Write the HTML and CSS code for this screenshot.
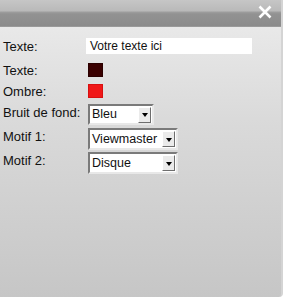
FILE: index.html
```html
<!DOCTYPE html>
<html>
<head>
  <meta charset="UTF-8">
  <title>Texte</title>
  <link rel="stylesheet" href="styles.css">
</head>
<body>
  <div class="panel">
    <div class="head">
      <svg class="close" width="14" height="14" viewBox="0 0 14 14">
        <path d="M1.5 1.5 L12.5 12.5 M12.5 1.5 L1.5 12.5" stroke="#fff" stroke-width="2.6" fill="none"/>
      </svg>
    </div>
    <div class="form">
      <div class="row r1">
        <label>Texte:</label>
        <div class="text">Votre texte ici</div>
      </div>
      <div class="row r2">
        <label>Texte:</label>
        <span class="swatch dark"></span>
      </div>
      <div class="row r3">
        <label>Ombre:</label>
        <span class="swatch red"></span>
      </div>
      <div class="row r4">
        <label>Bruit de fond:</label>
        <div class="select small"><span>Bleu</span><i class="arrow"></i></div>
      </div>
      <div class="row r5">
        <label>Motif 1:</label>
        <div class="select"><span>Viewmaster</span><i class="arrow"></i></div>
      </div>
      <div class="row r6">
        <label>Motif 2:</label>
        <div class="select"><span>Disque</span><i class="arrow"></i></div>
      </div>
    </div>
  </div>
</body>
</html>
```

FILE: styles.css
```css
* {padding: 0; margin: 0; box-sizing: border-box;}

html, body {
  width: 283px;
  height: 297px;
  overflow: hidden;
  font-family: "Liberation Sans", Arial, sans-serif;
  font-size: 13px;
  color: #111;
}
.panel {
  width: 283px;
  height: 297px;
  background: linear-gradient(#ededed 0%, #dadada 40%, #c6c6c6 100%);
  border-right: 2px solid #d4d4d4;
  border-bottom-right-radius: 4px;
}
.head {
  height: 27px;
  background: linear-gradient(#c6c6c6 0px, #b9b9b9 11px, #9e9e9e 12px, #929292 14px, #8b8b8b 26px, #a8a8a8 27px);
  display: flex;
  justify-content: flex-end;
  align-items: flex-start;
  padding: 5px 9px 0 0;
}
.head .close {
  display: block;
}
.form {
  padding: 0 0 0 3px;
}
.row {
  display: flex;
  align-items: flex-start;
}
.row label {
  width: 85px;
  line-height: 15px;
}
.r1 label {width: 83px; margin-top: 1px;}
.r1 {margin-top: 11px;}
.r2 {margin-top: 9px;}
.r3 {margin-top: 6px;}
.r4 {margin-top: 5px;}
.r5 {margin-top: 3px;}
.r6 {margin-top: 2px;}
.r4 label, .r5 label, .r6 label {margin-top: 1px;}
.text {
  width: 166px;
  height: 16px;
  background: #fff;
  padding-left: 4px;
  font-size: 12px;
  line-height: 16px;
}
.swatch {
  display: block;
  width: 15px;
  height: 14px;
}
.dark {background: #3a0000; border: 1px solid #2a0000;}
.red {background: #f01818; border: 1px solid #d81010;}
.select {
  display: flex;
  align-items: center;
  width: 90px;
  height: 22px;
  background: #fff;
  border: 2px solid;
  border-color: #7a7a7a #e8e8e8 #e8e8e8 #7a7a7a;
}
.select.small {width: 66px; height: 21px;}
.select span {
  flex: 1;
  padding-left: 2px;
  font-size: 12.5px;
  line-height: 17px;
  white-space: nowrap;
}
.select .arrow {
  display: flex;
  align-items: center;
  justify-content: center;
  width: 13px;
  height: 16px;
  margin-right: 1px;
  background: #ebebeb;
  border: 1px solid;
  border-color: #fff #6e6e6e #6e6e6e #fff;
}
.select .arrow::after {
  content: "";
  border-left: 3.5px solid transparent;
  border-right: 3.5px solid transparent;
  border-top: 4px solid #000;
  margin-top: 1px;
}
```
